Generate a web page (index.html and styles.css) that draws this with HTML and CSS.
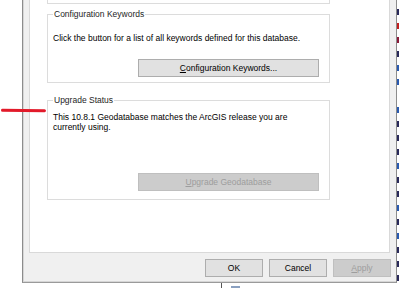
FILE: index.html
```html
<!DOCTYPE html>
<html>
<head>
<meta charset="utf-8">
<link rel="stylesheet" href="styles.css">
</head>
<body>
<div class="screen">
  <div class="gutter"></div>
  <div class="dialog">
    <div class="tabpanel">
      <div class="prevbox"></div>
      <fieldset class="group g1">
        <legend>Configuration Keywords</legend>
        <p class="desc">Click the button for a list of all keywords defined for this database.</p>
        <div class="btnrow"><button class="btn wide"><u>C</u>onfiguration Keywords...</button></div>
      </fieldset>
      <fieldset class="group g2">
        <legend>Upgrade Status</legend>
        <p class="desc">This 10.8.1 Geodatabase matches the ArcGIS release you are<br>currently using.</p>
        <div class="btnrow"><button class="btn wide disabled"><u>U</u>pgrade Geodatabase</button></div>
      </fieldset>
    </div>
    <div class="footer">
      <button class="btn small">OK</button>
      <button class="btn small">Cancel</button>
      <button class="btn small disabled"><u>A</u>pply</button>
    </div>
  </div>
  <div class="behind">
    <i class="m c1"></i><i class="m c2"></i><i class="m c3"></i><i class="m c1"></i><i class="m c4"></i><i class="m c4"></i><i class="m c0"></i><i class="m c4"></i><i class="m c1"></i><i class="m c1"></i><i class="m c1"></i><i class="m c4"></i><i class="m c1"></i><i class="m c1"></i><i class="m c4"></i><i class="m c1"></i><i class="m c4"></i><i class="m c1"></i><i class="m c1"></i><i class="m c1"></i>
  </div>
</div>
<div class="below">
  <div class="below-line"></div>
  <div class="below-icon"></div>
</div>
<div class="annot"></div>
</body>
</html>
```
FILE: styles.css
```css
*, *::before, *::after {
  box-sizing: border-box;
}
html, body {
  margin: 0;
  padding: 0;
  background: #ffffff;
}
body {
  width: 399px;
  height: 288px;
  overflow: hidden;
  position: relative;
  font-family: "Liberation Sans", Arial, sans-serif;
  font-size: 8.5px;
  color: #000;
}
.screen {
  display: flex;
  height: 283px;
}
.gutter {
  width: 22px;
  flex: none;
}
.dialog {
  width: 375px;
  flex: none;
  background: #f0f0f0;
  border-left: 1px solid #8c8c8c;
  border-right: 1px solid #8c8c8c;
  border-bottom: 1px solid #9a9a9a;
  box-shadow: inset 1px 0 0 #d6d6d6, inset 0 -1px 0 #d6d6d6;
  padding: 0 6px;
  display: flex;
  flex-direction: column;
}
.tabpanel {
  height: 253px;
  flex: none;
  background: #ffffff;
  border: 1px solid #d9d9d9;
  border-top: none;
  padding: 0 59px 0 17px;
  display: flex;
  flex-direction: column;
}
.prevbox {
  height: 4px;
  flex: none;
  border: 1px solid #dcdcdc;
  border-top: none;
}
.group {
  box-sizing: content-box;
  margin: 0;
  border: 1px solid #dcdcdc;
  padding: 0 5px;
  min-width: 0;
  flex: none;
}
.group legend {
  padding: 0 1px;
  margin-left: 0;
  line-height: 10px;
  color: #1e1e1e;
}
.g1 {
  margin-top: 5px;
  height: 72px;
}
.g2 {
  margin-top: 12px;
  height: 103px;
}
.desc {
  margin: 0;
  line-height: 10px;
  color: #000;
}
.g1 .desc {
  margin-top: 14px;
}
.g2 .desc {
  margin-top: 7px;
}
.btnrow {
  display: flex;
  justify-content: flex-end;
  padding-right: 5px;
}
.g1 .btnrow {
  margin-top: 16px;
}
.g2 .btnrow {
  margin-top: 41px;
}
.btn {
  font-family: "Liberation Sans", Arial, sans-serif;
  font-size: 8.5px;
  height: 18px;
  background: #e1e1e1;
  border: 1px solid #adadad;
  color: #000;
  padding: 0;
  margin: 0;
  border-radius: 0;
}
.btn.wide {
  width: 181px;
}
.btn.disabled {
  background: #cccccc;
  border-color: #bfbfbf;
  color: #9d9d9d;
}
.footer {
  display: flex;
  justify-content: flex-end;
  gap: 6px;
  padding-top: 6px;
  margin-right: -1px;
}
.btn.small {
  width: 58px;
}
.behind {
  width: 3px;
  flex: none;
  display: flex;
  flex-direction: column;
  align-items: flex-start;
  gap: 8px;
  padding-top: 9px;
}
.m {
  display: block;
  width: 2px;
  height: 6px;
  flex: none;
}
.c0 { background: transparent; }
.c1 { background: #2a2a5a; }
.c2 { background: #c02020; }
.c3 { background: #8a1a3a; }
.c4 { background: #2a5ab0; }
.below {
  position: relative;
  height: 5px;
}
.below-line {
  position: absolute;
  left: 221px;
  top: 0;
  width: 1px;
  height: 5px;
  background: #555;
}
.below-icon {
  position: absolute;
  left: 231px;
  top: 3px;
  width: 9px;
  height: 2px;
  background: #8aa0c0;
}
.annot {
  position: absolute;
  left: 1px;
  top: 109px;
  width: 45px;
  height: 3px;
  background: #e21a2a;
  border-radius: 2px;
  transform: rotate(0.8deg);
}
```
